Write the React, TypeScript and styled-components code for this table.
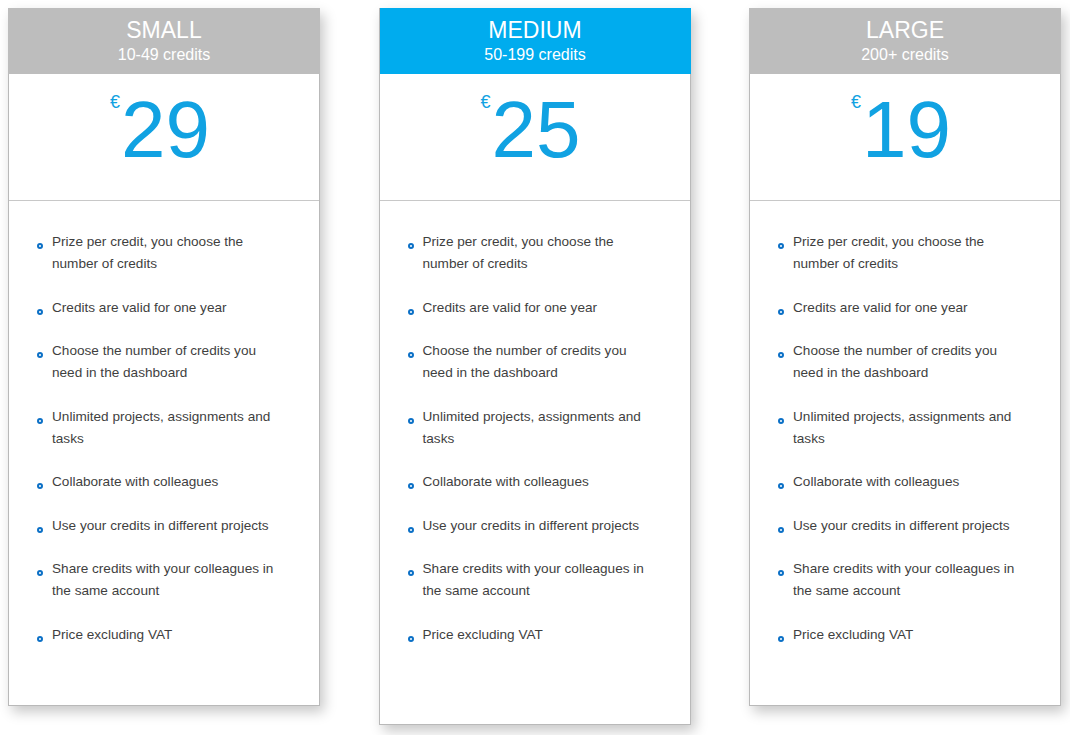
import React from "react";
import styled, { createGlobalStyle } from "styled-components";

const Global = createGlobalStyle`
  html, body { margin: 0; padding: 0; background: #ffffff; }
  body { font-family: "Liberation Sans", Arial, sans-serif; }
`;

const Page = styled.div`
  width: 1070px;
  height: 735px;
  box-sizing: border-box;
  padding: 8px 0 0 8px;
  display: flex;
  align-items: flex-start;
  gap: 58.5px;
  overflow: hidden;
`;

const Card = styled.div<{ $tall?: boolean }>`
  width: 312px;
  box-sizing: border-box;
  height: ${(p) => (p.$tall ? 717 : 698)}px;
  background: #fff;
  border: 1px solid #b9b9b9;
  box-shadow: 4px 6px 12px rgba(0, 0, 0, 0.22);
  display: flex;
  flex-direction: column;
`;

const Header = styled.div<{ $active?: boolean }>`
  background: ${(p) => (p.$active ? "#00acee" : "#bdbdbd")};
  color: #fff;
  display: flex;
  flex-direction: column;
  align-items: center;
  margin: -1px -1px 0 ${(p) => (p.$active ? "0" : "-1px")};
  padding-top: 9px;
  box-sizing: border-box;
  height: 66px;
`;

const Title = styled.div`
  font-size: 23px;
  line-height: 26px;
`;

const Sub = styled.div`
  font-size: 16px;
  line-height: 20px;
  margin-top: 2px;
`;

const PriceBox = styled.div`
  height: 127px;
  border-bottom: 1px solid #c8c8c8;
  display: flex;
  justify-content: center;
  align-items: flex-start;
  color: #11a2e2;
  padding: 11px 8px 0 0;
  box-sizing: border-box;
`;

const Euro = styled.span`
  font-size: 18px;
  line-height: 20px;
  margin-top: 7px;
  margin-right: 1px;
`;

const Amount = styled.span`
  font-size: 80px;
  line-height: 90px;
`;

const List = styled.ul`
  list-style: none;
  margin: 0;
  padding: 30px 0 0 43px;
  width: 276px;
  box-sizing: border-box;
`;

const Item = styled.li`
  position: relative;
  font-size: 13.6px;
  line-height: 22px;
  color: #3f3f3f;
  margin-bottom: 21.5px;
  &::before {
    content: "";
    position: absolute;
    left: -15px;
    top: 12px;
    width: 2px;
    height: 2px;
    border: 2px solid #0b70c6;
    border-radius: 50%;
  }
`;

const features = [
  "Prize per credit, you choose the number of credits",
  "Credits are valid for one year",
  "Choose the number of credits you need in the dashboard",
  "Unlimited projects, assignments and tasks",
  "Collaborate with colleagues",
  "Use your credits in different projects",
  "Share credits with your colleagues in the same account",
  "Price excluding VAT",
];

const plans = [
  { name: "SMALL", range: "10-49 credits", price: "29", active: false },
  { name: "MEDIUM", range: "50-199 credits", price: "25", active: true },
  { name: "LARGE", range: "200+ credits", price: "19", active: false },
];

export default function App() {
  return (
    <>
      <Global />
      <Page>
        {plans.map((p) => (
          <Card key={p.name} $tall={p.active}>
            <Header $active={p.active}>
              <Title>{p.name}</Title>
              <Sub>{p.range}</Sub>
            </Header>
            <PriceBox>
              <Euro>€</Euro>
              <Amount>{p.price}</Amount>
            </PriceBox>
            <List>
              {features.map((f) => (
                <Item key={f}>{f}</Item>
              ))}
            </List>
          </Card>
        ))}
      </Page>
    </>
  );
}
